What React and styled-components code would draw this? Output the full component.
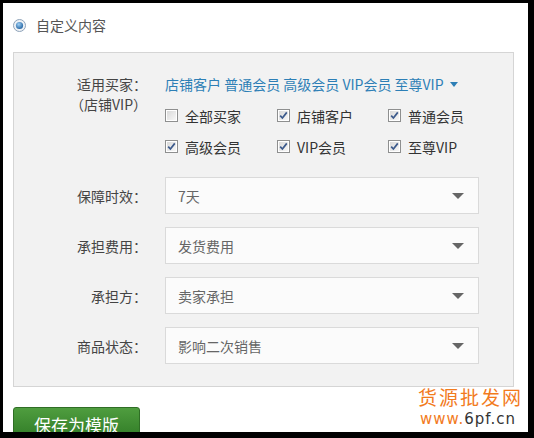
import React from "react";
import styled, {createGlobalStyle} from "styled-components";

const GlobalStyle = createGlobalStyle`
  html, body {
    margin: 0;
    padding: 0;
    background: #000;
  }

  body {
    font-family: "Noto Sans CJK SC", "Liberation Sans", sans-serif;
  }
`;

const Frame = styled.div`
  width: 534px;
  height: 438px;
  box-sizing: border-box;
  padding: 3px 6px 6px 3px;
  background: #000;
`;

const Sheet = styled.div`
  position: relative;
  height: 100%;
  box-sizing: border-box;
  padding: 10px 15px 0 10px;
  background: #fff;
  overflow: hidden;
`;

const RadioLine = styled.label`
  display: flex;
  align-items: center;
  gap: 10px;
  height: 24px;
  font-size: 14px;
  color: #555;
`;

const Panel = styled.div`
  margin-top: 15px;
  box-sizing: border-box;
  width: 501px;
  height: 335px;
  padding: 21px 0 0 0;
  border: 1px solid #d5d5d5;
  background: #f2f2f2;
`;

const Row = styled.div`
  display: flex;
  align-items: ${(p) => (p.$top ? "flex-start" : "center")};
  margin-bottom: ${(p) => p.$gap || 0}px;
`;

const Label = styled.div`
  width: 133px;
  margin-right: 18px;
  flex-shrink: 0;
  text-align: right;
  font-size: 14px;
  line-height: 20px;
  color: #444;
`;

const Buyers = styled.div`
  display: flex;
  flex-direction: column;
`;

const TagLine = styled.div`
  display: flex;
  align-items: center;
  gap: 5px;
  height: 20px;
  font-size: 14px;
  color: #2d7fb6;

  .caret {
    width: 0;
    height: 0;
    margin-left: 1px;
    border-left: 4px solid transparent;
    border-right: 4px solid transparent;
    border-top: 5px solid #2d7fb6;
  }
`;

const CheckGrid = styled.div`
  display: grid;
  grid-template-columns: 112px 111px 100px;
  grid-auto-rows: 31px;
  margin-top: 6px;
`;

const CheckItem = styled.label`
  display: flex;
  align-items: center;
  gap: 7px;
  font-size: 14px;
  color: #333;
`;

const Select = styled.div`
  display: flex;
  align-items: center;
  justify-content: space-between;
  box-sizing: border-box;
  width: 314px;
  height: 37px;
  padding: 0 14px 0 12px;
  border: 1px solid #dadada;
  background: #fbfbfb;
  font-size: 14px;
  color: #666;

  .arrow {
    width: 0;
    height: 0;
    border-left: 6px solid transparent;
    border-right: 6px solid transparent;
    border-top: 6px solid #666;
  }
`;

const SaveButton = styled.button`
  display: block;
  margin-top: 20px;
  width: 127px;
  height: 34px;
  padding: 0;
  border: 1px solid #2f6e25;
  border-radius: 3px;
  background: linear-gradient(#4f9d3f, #2f7a25);
  color: #fff;
  font-family: inherit;
  font-size: 17px;
  text-align: center;
`;

const Watermark = styled.div`
  position: absolute;
  left: 415px;
  top: 381px;
  white-space: nowrap;
  font-family: "DejaVu Sans", sans-serif;

  .cn {
    font-family: "Noto Sans CJK SC", sans-serif;
    font-size: 19px;
    letter-spacing: 2px;
    color: #f27b1d;
    line-height: 26px;
  }

  .url {
    font-size: 15px;
    letter-spacing: 1px;
    color: #333;
    line-height: 18px;
    margin-left: 2px;
  }

  .url span {
    color: #f27b1d;
  }
`;

const Radio = () => (
  <svg width="13" height="13" viewBox="0 0 13 13">
    <defs>
      <radialGradient id="rg" cx="0.4" cy="0.35" r="0.7">
        <stop offset="0" stopColor="#9fd0f5" />
        <stop offset="1" stopColor="#1f5f9e" />
      </radialGradient>
    </defs>
    <circle cx="6.5" cy="6.5" r="6" fill="#eef2f6" stroke="#8ea2b8" />
    <circle cx="6.5" cy="6.5" r="3.6" fill="url(#rg)" />
  </svg>
);

const Check = ({checked}) => (
  <svg width="13" height="13" viewBox="0 0 13 13">
    <defs>
      <linearGradient id="cg" x1="0" y1="0" x2="1" y2="1">
        <stop offset="0" stopColor="#d9d9d9" />
        <stop offset="1" stopColor="#f7f7f7" />
      </linearGradient>
    </defs>
    <rect x="0.5" y="0.5" width="12" height="12" fill="#fff" stroke="#8e8f8f" />
    <rect x="2" y="2" width="9" height="9" fill="url(#cg)" />
    {checked && (
      <path d="M3.2 6.6 L5.4 9 L9.8 3.4" fill="none" stroke="#3c5a8c" strokeWidth="1.7" />
    )}
  </svg>
);

const buyers = [
  {name: "全部买家", checked: false},
  {name: "店铺客户", checked: true},
  {name: "普通会员", checked: true},
  {name: "高级会员", checked: true},
  {name: "VIP会员", checked: true},
  {name: "至尊VIP", checked: true},
];

const selects = [
  {label: "保障时效：", value: "7天"},
  {label: "承担费用：", value: "发货费用"},
  {label: "承担方：", value: "卖家承担"},
  {label: "商品状态：", value: "影响二次销售"},
];

export default function App() {
  return (
    <Frame>
      <GlobalStyle />
      <Sheet>
        <RadioLine>
          <Radio />
          自定义内容
        </RadioLine>
        <Panel>
          <Row $top $gap={15}>
            <Label>
              适用买家：
              <br />
              （店铺VIP）
            </Label>
            <Buyers>
              <TagLine>
                店铺客户 普通会员 高级会员 VIP会员 至尊VIP
                <span className="caret" />
              </TagLine>
              <CheckGrid>
                {buyers.map((b) => (
                  <CheckItem key={b.name}>
                    <Check checked={b.checked} />
                    {b.name}
                  </CheckItem>
                ))}
              </CheckGrid>
            </Buyers>
          </Row>
          {selects.map((s) => (
            <Row key={s.label} $gap={13}>
              <Label>{s.label}</Label>
              <Select>
                {s.value}
                <span className="arrow" />
              </Select>
            </Row>
          ))}
        </Panel>
        <SaveButton>保存为模版</SaveButton>
        <Watermark>
          <div className="cn">货源批发网</div>
          <div className="url">
            <span>www.</span>6pf.cn
          </div>
        </Watermark>
      </Sheet>
    </Frame>
  );
}
